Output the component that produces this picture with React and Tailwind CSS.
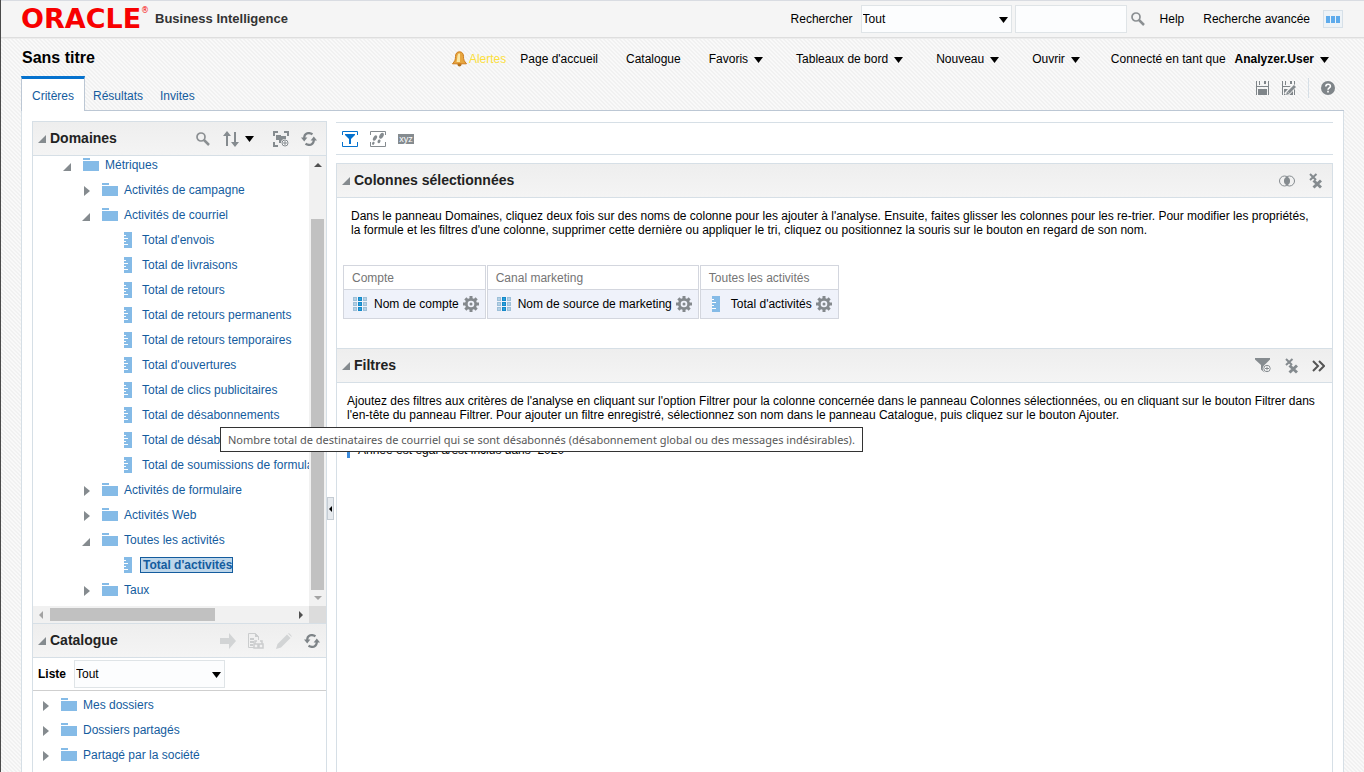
import React from 'react';

const Caret = ({ className = '' }) => (
  <svg width="9" height="6" viewBox="0 0 9 6" className={className} aria-hidden="true">
    <path d="M0 0h9L4.500 6z" fill="#000" />
  </svg>
);

const Expanded = () => (
  <svg width="8" height="8" viewBox="0 0 8 8" className="shrink-0" aria-hidden="true">
    <path d="M8 0v8H0z" fill="#858b8f" />
  </svg>
);

const Collapsed = () => (
  <svg width="6" height="10" viewBox="0 0 6 10" className="shrink-0" aria-hidden="true">
    <path d="M0 0l6 5-6 5z" fill="#858b8f" />
  </svg>
);

const FolderIcon = () => (
  <svg width="16" height="14" viewBox="0 0 16 14" className="shrink-0" aria-hidden="true">
    <path d="M0 0h7v2H0zM0 3h16v10H0z" fill="#85bbe7" />
  </svg>
);

const MeasureIcon = () => (
  <svg width="8" height="16" viewBox="0 0 8 16" className="shrink-0" aria-hidden="true">
    <path d="M0 0h8v16H0z" fill="#85bbe7" />
    <path d="M0 3.500h2M0 6.500h4M0 9.500h2M0 12.500h4" stroke="#fff" />
  </svg>
);

const ColumnIcon = () => (
  <svg width="14" height="14" viewBox="0 0 14 14" className="shrink-0" aria-hidden="true">
    <path d="M0 0h4v4H0zM0 5h4v4H0zM0 10h4v4H0zM10 0h4v4h-4zM10 5h4v4h-4zM10 10h4v4h-4z" fill="#9dbfd8" />
    <path d="M1 1h2v2H1zM1 6h2v2H1zM1 11h2v2H1zM11 1h2v2h-2zM11 6h2v2h-2zM11 11h2v2h-2z" fill="#b4d1e6" />
    <path d="M5 0h4v4H5zM5 5h4v4H5zM5 10h4v4H5z" fill="#1589c9" />
    <path d="M6 1h2v2H6zM6 6h2v2H6zM6 11h2v2H6z" fill="#2a9fda" />
  </svg>
);

const GearIcon = () => (
  <svg width="16" height="16" viewBox="0 0 16 16" aria-hidden="true">
    <g fill="#84898d">
      <path d="M6.500 0h3v16h-3z" />
      <path d="M6.500 0h3v16h-3z" transform="rotate(45 8 8)" />
      <path d="M6.500 0h3v16h-3z" transform="rotate(90 8 8)" />
      <path d="M6.500 0h3v16h-3z" transform="rotate(135 8 8)" />
      <circle cx="8" cy="8" r="6" />
    </g>
    <circle cx="8" cy="8" r="3.300" fill="#eff2fa" />
    <circle cx="8" cy="8" r="1.500" fill="#84898d" />
  </svg>
);

const SearchIcon = () => (
  <svg width="14" height="14" viewBox="0 0 14 14" fill="none" stroke="#8b8f92" aria-hidden="true">
    <circle cx="5" cy="5" r="4" strokeWidth="1.700" />
    <path d="M8 8l5 5" strokeWidth="2.500" />
  </svg>
);

const SortIcon = () => (
  <svg width="16" height="16" viewBox="0 0 16 16" aria-hidden="true">
    <path d="M4 3v12M12 1v12" stroke="#858b8f" strokeWidth="2" />
    <path d="M0 5l4-5 4 5zM8 11l4 5 4-5z" fill="#858b8f" />
  </svg>
);

const AddSubjectIcon = () => (
  <svg width="16" height="16" viewBox="0 0 16 16" aria-hidden="true">
    <path d="M1 5V1h4M11 1h4v4M1 11v4h4" fill="none" stroke="#858b8f" strokeWidth="2" />
    <path d="M3 4h5v1h5v7H6V9H3z" fill="#858b8f" />
    <circle cx="12" cy="12" r="4" fill="#f1f1f1" />
    <circle cx="12" cy="12" r="3" fill="#fff" stroke="#858b8f" />
    <path d="M12 10v4M10 12h4" stroke="#858b8f" />
  </svg>
);

const RefreshIcon = () => (
  <svg width="16" height="14" viewBox="0 0 16 14" fill="none" aria-hidden="true">
    <path d="M11.500 2.200C7-.4 3.200 1.800 3.200 6" stroke="#7e8488" strokeWidth="2.200" />
    <path d="M0 5.500h6.400L3.200 9.500z" fill="#7e8488" />
    <path d="M4.500 11.800c4.500 2.600 8.300.4 8.300-3.800" stroke="#7e8488" strokeWidth="2.200" />
    <path d="M9.600 8.500H16l-3.200-4z" fill="#7e8488" />
  </svg>
);

const FilterPaneIcon = () => (
  <svg width="16" height="16" viewBox="0 0 16 16" aria-hidden="true">
    <path d="M.5 4V.5h15V4M.5 11v4.500h15V11" fill="none" stroke="#0572ce" />
    <path d="M3 3h10v1L9 8v5H7V8L3 4z" fill="#0572ce" />
  </svg>
);

const StepsIcon = () => (
  <svg width="16" height="16" viewBox="0 0 16 16" aria-hidden="true">
    <path d="M.5 4V.5h15V4M.5 11v4.500h15V11" fill="none" stroke="#858b8f" />
    <g fill="#858b8f">
      <ellipse cx="5" cy="7" rx="1.700" ry="3" transform="rotate(30 5 7)" />
      <ellipse cx="11.500" cy="4.800" rx="1.900" ry="3.200" transform="rotate(30 11.500 4.800)" />
      <ellipse cx="3.300" cy="12.300" rx="1.200" ry="1.600" transform="rotate(25 3.300 12.300)" />
      <ellipse cx="9" cy="10.300" rx="1.400" ry="1.900" transform="rotate(25 9 10.300)" />
    </g>
  </svg>
);

const SaveIcon = ({ edit }) => (
  <svg width="14" height="14" viewBox="0 0 14 14" aria-hidden="true">
    <path d="M0 0h1v5h11V0h1v14h-1V6H1v8H0zM2 8h9v6H2zM3 0h1v4H3zM8 0h2v3H8z" fill="#7f8589" />
    {edit && (
      <>
        <path d="M4 14l9-10" stroke="#f5f5f5" strokeWidth="5" />
        <path d="M6.500 11.500L13 5" stroke="#858b8f" strokeWidth="3" />
        <path d="M4 14l1-3.500L7.500 13z" fill="#858b8f" />
      </>
    )}
  </svg>
);

const HelpIcon = () => (
  <svg width="14" height="14" viewBox="0 0 14 14" aria-hidden="true">
    <circle cx="7" cy="7" r="7" fill="#7f8589" />
    <path d="M4.800 5.500c0-3 4.600-2.900 4.600-.3C9.400 6.800 7 6.800 7 8.700M7 9.700v1.800" fill="none" stroke="#fff" strokeWidth="1.600" />
  </svg>
);

const BellIcon = () => (
  <svg width="15" height="16" viewBox="0 0 15 16" aria-hidden="true">
    <circle cx="7.500" cy="13.500" r="2" fill="#b3701a" />
    <path d="M7.500.8c2.700 0 4 2 4 4.700 0 3.300.7 4.700 3 7.300H.5c2.300-2.600 3-4 3-7.300 0-2.700 1.300-4.700 4-4.700z" fill="#e6a640" stroke="#cf7d1c" />
    <path d="M6.500 2.500C5 4 5.500 8 4.500 11h3.500V2.500z" fill="#fbe7a6" />
  </svg>
);

const UnionIcon = () => (
  <svg width="16" height="12" viewBox="0 0 16 12" fill="none" stroke="#858b8f" aria-hidden="true">
    <circle cx="5.500" cy="6" r="5" />
    <circle cx="10.500" cy="6" r="5" />
    <path d="M8 1.800a5 5 0 0 1 0 8.400 5 5 0 0 1 0-8.400z" fill="#858b8f" />
  </svg>
);

const RemoveAllIcon = () => (
  <svg width="13" height="16" viewBox="0 0 13 16" fill="none" stroke="#858b8f" aria-hidden="true">
    <path d="M1 1l6 6M7.500 1L1 7" strokeWidth="2" />
    <path d="M4.500 7.500l7.500 7M12 7.500l-7.500 7" strokeWidth="3" />
  </svg>
);

const AddFilterIcon = () => (
  <svg width="16" height="15" viewBox="0 0 16 15" aria-hidden="true">
    <path d="M0 0h15v1.500L9.500 7v7.500l-3.500-3V7L0 1.500z" fill="#858b8f" />
    <circle cx="12" cy="10.500" r="4.300" fill="#f2f2f2" />
    <circle cx="12" cy="10.500" r="3.200" fill="#fff" stroke="#858b8f" />
    <path d="M12 8.500v4M10 10.500h4" stroke="#858b8f" />
  </svg>
);

const MoreIcon = () => (
  <svg width="13" height="12" viewBox="0 0 13 12" fill="none" stroke="#555" strokeWidth="2" aria-hidden="true">
    <path d="M1 1l5 5-5 5M7 1l5 5-5 5" />
  </svg>
);

const ArrowIcon = () => (
  <svg width="16" height="16" viewBox="0 0 16 16" aria-hidden="true">
    <path d="M0 5h9V0l7 8-7 8v-5H0z" fill="#d2d4d5" />
  </svg>
);

const ReportIcon = () => (
  <svg width="16" height="16" viewBox="0 0 16 16" fill="none" stroke="#cbcdce" aria-hidden="true">
    <path d="M6 14.500H.5V.5h7l3 3V7" />
    <path d="M7 0l4 4H7zM2 5h4v2H2zM2 8h4v2H2zM2 11h3v2H2z" fill="#cbcdce" stroke="none" />
    <path d="M7 11V8h2M12 8h2v3M6 11h4v4H6zM11 11h4v4h-4z" strokeWidth="1.500" />
  </svg>
);

const PencilIcon = () => (
  <svg width="16" height="16" viewBox="0 0 16 16" aria-hidden="true">
    <path d="M0 16l1.500-5L11 1.500 14.500 5 5 14.500zM12 .5c1-1 4.500 2.500 3.500 3.500z" fill="#d2d4d5" />
  </svg>
);

const IconButton = ({ label, children }) => (
  <button type="button" aria-label={label} className="flex shrink-0 items-center">
    {children}
  </button>
);

const NavMenu = ({ label, bold }) => (
  <button type="button" className="flex items-center gap-1.5">
    <span className={bold ? 'font-bold' : ''}>{label}</span>
    <Caret className="mt-0.5" />
  </button>
);

const PanelHeader = ({ title, children, className = '' }) => (
  <div className={`flex h-[34px] items-center gap-1 border-b border-[#d6dfe6] bg-gradient-to-b from-[#eeeeee] to-[#f4f4f4] pl-[5px] ${className}`}>
    <Expanded />
    <h2 className="flex-1 pb-0.5 text-sm font-bold text-[#222]">{title}</h2>
    {children}
  </div>
);

const tree = [
  { label: 'Métriques', level: 0, open: true },
  { label: 'Activités de campagne', level: 1 },
  { label: 'Activités de courriel', level: 1, open: true },
  { label: "Total d'envois", level: 2 },
  { label: 'Total de livraisons', level: 2 },
  { label: 'Total de retours', level: 2 },
  { label: 'Total de retours permanents', level: 2 },
  { label: 'Total de retours temporaires', level: 2 },
  { label: "Total d'ouvertures", level: 2 },
  { label: 'Total de clics publicitaires', level: 2 },
  { label: 'Total de désabonnements', level: 2 },
  { label: 'Total de désabonnements globaux', level: 2 },
  { label: 'Total de soumissions de formulaire', level: 2 },
  { label: 'Activités de formulaire', level: 1 },
  { label: 'Activités Web', level: 1 },
  { label: 'Toutes les activités', level: 1, open: true },
  { label: "Total d'activités", level: 2, selected: true },
  { label: 'Taux', level: 1 },
];

const columns = [
  { folder: 'Compte', name: 'Nom de compte' },
  { folder: 'Canal marketing', name: 'Nom de source de marketing' },
  { folder: 'Toutes les activités', name: "Total d'activités", measure: true },
];

const TreeRow = ({ label, level, open, selected }) => {
  if (level === 2) {
    return (
      <li className="flex h-[25px] items-center gap-2 pl-[91px]">
        <MeasureIcon />
        <a
          href="#"
          className={
            selected
              ? 'border border-[#145c9e] bg-[#bdd6ea] pl-0.5 leading-[14px] font-bold'
              : 'pl-0.5'
          }
        >
          {label}
        </a>
      </li>
    );
  }
  return (
    <li className={`flex h-[25px] items-center ${level === 0 ? 'pl-[30px]' : 'pl-[49px]'}`}>
      <span className={`flex w-5 ${open ? 'pt-1' : 'pl-0.5 pt-0.5'}`}>{open ? <Expanded /> : <Collapsed />}</span>
      <FolderIcon />
      <a href="#" className="ml-1.5">{label}</a>
    </li>
  );
};

const Domains = () => (
  <section>
    <PanelHeader title="Domaines" className="pr-[9px]">
      <div className="flex items-center">
        <IconButton label="Rechercher"><SearchIcon /></IconButton>
        <button type="button" aria-label="Trier" className="ml-[13px] flex items-center gap-1.5">
          <SortIcon />
          <Caret />
        </button>
        <div className="ml-[19px] flex items-center gap-3">
          <IconButton label="Ajouter un domaine"><AddSubjectIcon /></IconButton>
          <IconButton label="Actualiser"><RefreshIcon /></IconButton>
        </div>
      </div>
    </PanelHeader>
    <div className="flex h-[450px]">
      <ul className="-mt-1 min-w-0 flex-1 overflow-hidden whitespace-nowrap text-[#145c9e]">
        {tree.map((item) => (
          <TreeRow key={item.label + item.level} {...item} />
        ))}
      </ul>
      <div className="flex w-[17px] flex-col items-center bg-[#f1f1f1] pt-[7px]">
        <svg width="8" height="4" viewBox="0 0 8 4"><path d="M0 4l4-4 4 4z" fill="#505050" /></svg>
        <div className="mt-[52px] w-[13px] flex-1 bg-[#c1c1c1]" />
        <svg width="8" height="4" viewBox="0 0 8 4" className="my-1.5"><path d="M0 0l4 4 4-4z" fill="#a3a3a3" /></svg>
      </div>
    </div>
    <div className="flex h-[17px] items-center bg-[#f1f1f1] pl-1.5">
      <svg width="4" height="8" viewBox="0 0 4 8"><path d="M4 0v8L0 4z" fill="#a3a3a3" /></svg>
      <div className="ml-[7px] h-[13px] w-[165px] bg-[#c1c1c1]" />
      <svg width="4" height="8" viewBox="0 0 4 8" className="mr-1.5 ml-auto"><path d="M0 0v8l4-4z" fill="#505050" /></svg>
      <div className="h-full w-[17px] bg-[#dcdcdc]" />
    </div>
  </section>
);

const Catalog = () => (
  <section>
    <PanelHeader title="Catalogue" className="h-[35px] border-t pr-1.5">
      <div className="flex items-center gap-3">
        <IconButton label="Ajouter"><ArrowIcon /></IconButton>
        <IconButton label="Aperçu"><ReportIcon /></IconButton>
        <IconButton label="Modifier"><PencilIcon /></IconButton>
        <IconButton label="Actualiser"><RefreshIcon /></IconButton>
      </div>
    </PanelHeader>
    <div className="flex h-[33px] items-center gap-2 border-b border-[#cfcfcf] pl-[5px]">
      <label htmlFor="liste" className="font-bold">Liste</label>
      <div className="relative">
        <select id="liste" className="h-7 w-[151px] appearance-none border border-[#dfe4e7] bg-[#fcfdfe] pl-px">
          <option>Tout</option>
        </select>
        <Caret className="pointer-events-none absolute top-3 right-1" />
      </div>
    </div>
    <ul className="pt-px text-[#145c9e]">
      {['Mes dossiers', 'Dossiers partagés', 'Partagé par la société'].map((name) => (
        <li key={name} className="flex h-[25px] items-center pl-[10px]">
          <span className="flex w-[18px] pt-0.5"><Collapsed /></span>
          <FolderIcon />
          <a href="#" className="ml-1.5">{name}</a>
        </li>
      ))}
    </ul>
  </section>
);

const Criteria = () => (
  <div className="flex min-w-0 flex-1 flex-col">
    <div className="mt-px flex h-[33px] items-center gap-3 border-y border-[#d6dfe6] pl-1.5">
      <IconButton label="Afficher les filtres"><FilterPaneIcon /></IconButton>
      <IconButton label="Étapes de sélection"><StepsIcon /></IconButton>
      <button type="button" className="h-[10px] w-4 bg-[#858b8f] text-center text-[9px] leading-[8px] text-white">xyz</button>
    </div>

    <div className="mt-2 flex flex-1 flex-col border-x border-t border-[#d6dfe6]">
      <section className="min-h-[184px]">
        <PanelHeader title="Colonnes sélectionnées" className="pr-[10px]">
          <div className="flex items-center gap-[14px]">
            <IconButton label="Combiner les résultats"><UnionIcon /></IconButton>
            <IconButton label="Enlever toutes les colonnes"><RemoveAllIcon /></IconButton>
          </div>
        </PanelHeader>
        <p className="pt-[11px] pr-4 pl-[14px] leading-[14px]">
          Dans le panneau Domaines, cliquez deux fois sur des noms de colonne pour les ajouter à l'analyse. Ensuite, faites
          glisser les colonnes pour les re-trier. Pour modifier les propriétés, la formule et les filtres d'une colonne,
          supprimer cette dernière ou appliquer le tri, cliquez ou positionnez la souris sur le bouton en regard de son nom.
        </p>
        <div className="mt-7 ml-1.5 flex gap-px">
          {columns.map((col) => (
            <div key={col.name} className="border border-[#d3d6de]">
              <div className="h-6 border-b border-[#d3d6de] pl-2 leading-6 text-[#757575]">{col.folder}</div>
              <div className="flex h-7 items-center bg-[#eff2fa] pr-1.5 pl-[9px]">
                {col.measure ? <span className="flex w-[14px] pl-0.5"><MeasureIcon /></span> : <ColumnIcon />}
                <span className="mr-1 ml-[7px]">{col.name}</span>
                <IconButton label={`Options : ${col.name}`}><GearIcon /></IconButton>
              </div>
            </div>
          ))}
        </div>
      </section>

      <section>
        <PanelHeader title="Filtres" className="h-[35px] border-t pr-[7px]">
          <div className="flex items-center gap-[14px]">
            <IconButton label="Ajouter un filtre"><AddFilterIcon /></IconButton>
            <IconButton label="Enlever tous les filtres"><RemoveAllIcon /></IconButton>
            <IconButton label="Plus d'options"><MoreIcon /></IconButton>
          </div>
        </PanelHeader>
        <p className="px-[10px] pt-[11px] leading-[14px]">
          Ajoutez des filtres aux critères de l'analyse en cliquant sur l'option Filtrer pour la colonne concernée dans le
          panneau Colonnes sélectionnées, ou en cliquant sur le bouton Filtrer dans l'en-tête du panneau Filtrer. Pour
          ajouter un filtre enregistré, sélectionnez son nom dans le panneau Catalogue, puis cliquez sur le bouton Ajouter.
        </p>
        <div className="mt-5 ml-[10px] border-l-[3px] border-[#3c8bdc] pl-2 leading-4">
          Année est égal à/est inclus dans &nbsp;2020
        </div>
      </section>
    </div>
  </div>
);

export default function App() {
  return (
    <div className="relative flex min-h-screen flex-col border-l border-[#4a4a4a] bg-[linear-gradient(45deg,#f9f9f9_25%,#f1f1f1_25%_50%,#f9f9f9_50%_75%,#f1f1f1_75%)] bg-[length:4px_4px] font-['Liberation_Sans',Arial,sans-serif] text-xs text-black">
      <header className="flex h-[38px] items-center border-t border-b border-t-[#d9dce2] border-b-[#dedede] bg-[#f5f5f5] pr-[21px] pl-5">
        <div className="flex w-[134px] items-start font-['DejaVu_Sans',sans-serif] leading-8 text-[#f80000]">
          <span className="text-[27px] font-bold">ORACLE</span>
          <span className="text-[8px] leading-4">®</span>
        </div>
        <span className="flex-1 text-[13px] font-bold text-[#333]">Business Intelligence</span>
        <label htmlFor="scope">Rechercher</label>
        <div className="relative ml-2">
          <select id="scope" className="h-7 w-[151px] appearance-none border border-[#dfe4e7] bg-[#fcfdfe] pl-px">
            <option>Tout</option>
          </select>
          <Caret className="pointer-events-none absolute top-3 right-1" />
        </div>
        <input aria-label="Texte à rechercher" className="ml-[3px] h-7 w-28 border border-[#dfe4e7] bg-[#fcfdfe] px-1" />
        <div className="ml-1 flex items-center">
          <IconButton label="Lancer la recherche"><SearchIcon /></IconButton>
        </div>
        <a href="#" className="ml-[15px]">Help</a>
        <a href="#" className="ml-[19px]">Recherche avancée</a>
        <button type="button" aria-label="Plus" className="ml-[13px] flex h-[18px] w-5 items-center justify-center gap-px border border-[#d6e0e8] bg-[#eef3f7]">
          <span className="h-[7px] w-1 bg-[#5eabec]" />
          <span className="h-[7px] w-1 bg-[#5eabec]" />
          <span className="h-[7px] w-1 bg-[#5eabec]" />
        </button>
      </header>

      <div className="flex h-[38px] items-center border-t border-[#ececec] pr-[35px] pl-[21px]">
        <h1 className="flex-1 text-base font-bold">Sans titre</h1>
        <nav className="flex items-center gap-[33px] pt-0.5">
          <div className="flex items-center gap-7">
            <div className="flex items-center gap-[14px]">
              <a href="#" className="flex items-center gap-0.5 text-[#fbdf3d]">
                <BellIcon />
                Alertes
              </a>
              <a href="#">Page d'accueil</a>
            </div>
            <a href="#">Catalogue</a>
            <NavMenu label="Favoris" />
          </div>
          <NavMenu label="Tableaux de bord" />
          <NavMenu label="Nouveau" />
          <NavMenu label="Ouvrir" />
          <div className="-ml-0.5 flex items-center gap-[9px]">
            <span>Connecté en tant que</span>
            <NavMenu label="Analyzer.User" bold />
          </div>
        </nav>
      </div>

      <div className="flex h-[35px] px-5">
        <div role="tablist" className="flex text-[#145c9e]">
          <button role="tab" aria-selected="true" className="w-16 border-x border-t-[3px] border-x-[#bcc7d4] border-t-[#0572ce] bg-white pt-0.5">
            Critères
          </button>
          <button role="tab" aria-selected="false" className="border-b border-[#bcc7d4] px-2 pt-1.5">Résultats</button>
          <button role="tab" aria-selected="false" className="border-b border-[#bcc7d4] px-[9px] pt-1.5">Invites</button>
        </div>
        <div className="flex flex-1 items-center justify-end gap-3 border-b border-[#bcc7d4] pr-[9px] pb-[10px]">
          <IconButton label="Enregistrer l'analyse"><SaveIcon /></IconButton>
          <IconButton label="Enregistrer l'analyse sous"><SaveIcon edit /></IconButton>
          <div className="h-5 w-px bg-[#d6dfe6]" />
          <IconButton label="Aide"><HelpIcon /></IconButton>
        </div>
      </div>

      <main className="mr-5 ml-5 flex flex-1 border-x border-[#d6dfe6] bg-white pt-[10px] pr-[10px] pl-[10px]">
        <div className="w-[295px] shrink-0 border-x border-t border-[#d6dfe6]">
          <Domains />
          <Catalog />
        </div>
        <div className="w-[9px] shrink-0 pt-[376px]">
          <button type="button" aria-label="Réduire le volet" className="flex h-[23px] w-[7px] items-center justify-center border border-[#c5ccd3] bg-[#e6eaee]">
            <svg width="3" height="6" viewBox="0 0 3 6"><path d="M3 0v6L0 3z" fill="#000" /></svg>
          </button>
        </div>
        <Criteria />
      </main>

      <div role="tooltip" className="absolute top-[427px] left-[219px] border border-[#333] bg-white px-[7px] font-['Noto_Sans','Open_Sans',sans-serif] text-[11px] leading-[23px] whitespace-nowrap text-[#575757]">
        Nombre total de destinataires de courriel qui se sont désabonnés (désabonnement global ou des messages indésirables).
      </div>
    </div>
  );
}
